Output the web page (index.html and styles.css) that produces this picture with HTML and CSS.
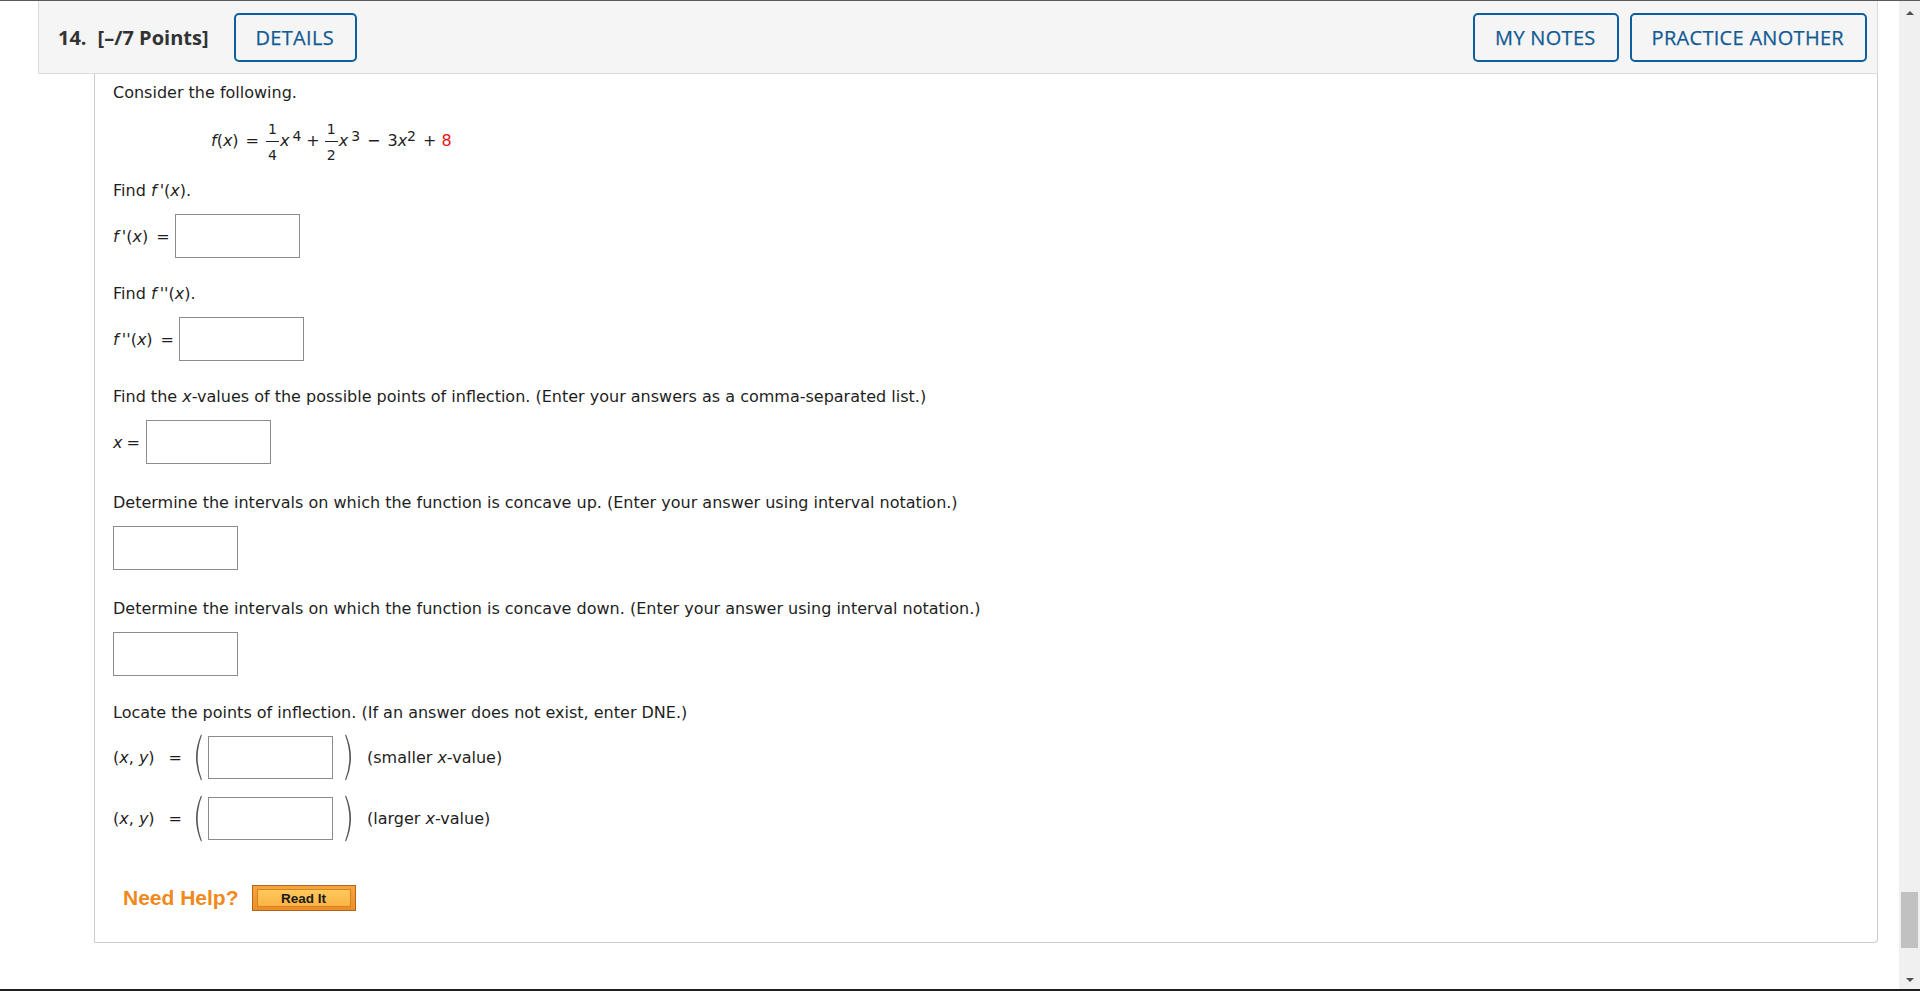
FILE: index.html
```html
<!DOCTYPE html>
<html lang="en">
<head>
<meta charset="utf-8">
<title>Question 14</title>
<link rel="stylesheet" href="styles.css">
</head>
<body>
<div class="frame">
  <div class="topline"></div>
  <div class="viewport">
    <div class="page">
      <div class="qhead">
        <div class="qnum"><span>14.</span><span class="pts">[–/7 Points]</span></div>
        <button class="hbtn details">DETAILS</button>
        <div class="spacer"></div>
        <button class="hbtn notes">MY NOTES</button>
        <button class="hbtn">PRACTICE ANOTHER</button>
      </div>
      <div class="qbody">
        <p class="txt">Consider the following.</p>
        <div class="eq"><i>f</i>(<i>x</i>)<span class="op w">=</span><span class="frac"><span class="num">1</span><span class="den">4</span></span><i class="v">x</i><sup class="g">4</sup><span class="op">+</span><span class="frac"><span class="num">1</span><span class="den">2</span></span><i class="v">x</i><sup class="g">3</sup><span class="op w">−</span>3<i>x</i><sup>2</sup><span class="op wl">+</span><span class="red">8</span></div>

        <div class="q q1">
          <p class="txt">Find <i>f</i>&thinsp;'(<i>x</i>).</p>
          <div class="row"><span class="lbl"><i>f</i>&thinsp;'(<i>x</i>)<span class="eqs">=</span></span><input class="ans" type="text"></div>
        </div>

        <div class="q">
          <p class="txt">Find <i>f</i>&thinsp;''(<i>x</i>).</p>
          <div class="row"><span class="lbl"><i>f</i>&thinsp;''(<i>x</i>)<span class="eqs">=</span></span><input class="ans" type="text"></div>
        </div>

        <div class="q">
          <p class="txt">Find the <i>x</i>-values of the possible points of inflection. (Enter your answers as a comma-separated list.)</p>
          <div class="row"><span class="lbl"><i>x</i><span class="eqs t">=</span></span><input class="ans" type="text"></div>
        </div>

        <div class="q q-wide">
          <p class="txt">Determine the intervals on which the function is concave up. (Enter your answer using interval notation.)</p>
          <div class="row"><input class="ans" type="text"></div>
        </div>

        <div class="q q-wide">
          <p class="txt">Determine the intervals on which the function is concave down. (Enter your answer using interval notation.)</p>
          <div class="row"><input class="ans" type="text"></div>
        </div>

        <div class="q q-loc">
          <p class="txt">Locate the points of inflection. (If an answer does not exist, enter DNE.)</p>
          <div class="prow first">
            <span class="lbl">(<i>x</i>, <i>y</i>)<span class="eqs p">=</span></span>
            <svg class="paren lp" width="12" height="47" viewBox="0 0 12 47"><path d="M11 0.5 Q1 23.5 11 46.5 L11.9 45.8 Q3.4 23.5 11.9 1.2 Z" fill="#555"/></svg>
            <input class="ans pt" type="text">
            <svg class="paren rp" width="12" height="47" viewBox="0 0 12 47"><path d="M1 0.5 Q11 23.5 1 46.5 L0.1 45.8 Q8.6 23.5 0.1 1.2 Z" fill="#555"/></svg>
            <span class="note">(smaller <i>x</i>-value)</span>
          </div>
          <div class="prow">
            <span class="lbl">(<i>x</i>, <i>y</i>)<span class="eqs p">=</span></span>
            <svg class="paren lp" width="12" height="47" viewBox="0 0 12 47"><path d="M11 0.5 Q1 23.5 11 46.5 L11.9 45.8 Q3.4 23.5 11.9 1.2 Z" fill="#555"/></svg>
            <input class="ans pt" type="text">
            <svg class="paren rp" width="12" height="47" viewBox="0 0 12 47"><path d="M1 0.5 Q11 23.5 1 46.5 L0.1 45.8 Q8.6 23.5 0.1 1.2 Z" fill="#555"/></svg>
            <span class="note">(larger <i>x</i>-value)</span>
          </div>
        </div>

        <div class="help">
          <span class="needhelp">Need Help?</span>
          <button class="readit"><span>Read It</span></button>
        </div>
      </div>
    </div>
    <div class="scrollbar">
      <div class="sb-up"></div>
      <div class="sb-track"></div>
      <div class="sb-thumb"></div>
      <div class="sb-down"></div>
    </div>
  </div>
  <div class="bottomline"></div>
</div>
</body>
</html>
```

FILE: styles.css
```css
* { box-sizing: border-box; }
html, body { margin: 0; height: 991px; overflow: hidden; background: #fff; }
body { font-family: "DejaVu Sans", Verdana, sans-serif; font-size: 16px; color: #1e1e1e; }

.frame { height: 991px; display: flex; flex-direction: column; }
.topline { height: 1px; background: #5a5a5a; flex: none; }
.bottomline { height: 2px; background: #1f1f1f; flex: none; }
.viewport { flex: 1; display: flex; min-height: 0; }
.page { flex: 1; padding: 0 21px 0 38px; }

/* scrollbar */
.scrollbar { width: 21px; flex: none; background: #f0f0f0; display: flex; flex-direction: column; align-items: center; }
.sb-up { width: 0; height: 0; border-left: 4px solid transparent; border-right: 4px solid transparent; border-bottom: 4px solid #505050; margin-top: 10px; }
.sb-track { flex: 1; }
.sb-thumb { width: 17px; height: 56px; background: #c1c1c1; margin-bottom: 30px; }
.sb-down { width: 0; height: 0; border-left: 4px solid transparent; border-right: 4px solid transparent; border-top: 4px solid #505050; margin-bottom: 7px; }

/* question header */
.qhead { height: 73px; display: flex; align-items: center; background: #f5f5f5; border: 1px solid #dcdcdc; border-top: 0; padding: 0 10px 0 19px; }
.qnum { font-family: "Open Sans", sans-serif; font-weight: 700; font-size: 20px; color: #333; white-space: nowrap; }
.qnum .pts { margin-left: 11px; }
.hbtn { font-family: "Open Sans", sans-serif; font-size: 20px; font-weight: 400; letter-spacing: 0.3px; -webkit-text-stroke: 0.25px #125a93; color: #125a93; background: transparent; border: 2px solid #0f5f9c; border-radius: 5px; height: 49px; padding: 0 21px 0 20px; margin: 0; white-space: nowrap; cursor: pointer; }
.details { margin-left: 25px; }
.notes { margin-right: 11px; }
.spacer { flex: 1; }

/* question body */
.qbody { margin-left: 56px; border: 1px solid #cccccc; border-top: 0; border-radius: 0 0 4px 0; padding: 9px 18px 31px 18px; }
.txt { margin: 0; line-height: 19px; white-space: nowrap; }
i { font-style: italic; }

.eq { margin-top: 20px; padding-left: 98px; line-height: 19px; white-space: nowrap; }
.op { margin: 0 5px; }
.op.w { margin: 0 7px; }
.op.wl { margin: 0 5px 0 7px; }
.v { margin-left: 1px; }
sup { font-size: 14px; line-height: 0; vertical-align: 5px; }
sup.g { margin-left: 3px; }
.red { color: #f01010; }
.frac { display: inline-block; vertical-align: -14px; text-align: center; font-size: 14px; line-height: 15px; }
.num { display: block; padding: 0 2px 4px; border-bottom: 1px solid #222; }
.den { display: block; padding-top: 6px; }

.q { margin-top: 26px; }
.q1 { margin-top: 18px; }
.q-wide { margin-top: 29px; }
.q-loc { margin-top: 27px; }

.row { display: flex; align-items: center; margin-top: 14px; height: 44px; line-height: 19px; }
.lbl { white-space: nowrap; line-height: 19px; }
.eqs { margin: 0 5px 0 8px; }
.eqs.t { margin: 0 6px 0 4px; }
.eqs.p { margin: 0 8px 0 14px; }

.ans { width: 125px; height: 44px; border: 1px solid #8c8c8c; border-radius: 0; background: #fff; padding: 0 4px; margin: 0; font: 16px "DejaVu Sans", sans-serif; }
.ans.pt { height: 43px; }

.prow { display: flex; align-items: center; height: 47px; margin-top: 14px; line-height: 19px; }
.prow.first { margin-top: 12px; }
.paren { display: block; flex: none; }
.paren.lp { margin-right: 6px; }
.paren.rp { margin-left: 12px; }
.note { margin-left: 10px; white-space: nowrap; }

.help { display: flex; align-items: center; height: 26px; margin-top: 43px; padding-left: 10px; }
.needhelp { font-family: "Liberation Sans", Arial, sans-serif; font-weight: 700; font-size: 21px; color: #f0891c; }
.readit { margin-left: 13px; width: 104px; height: 26px; padding: 3px 4px; border: 1px solid #b0661f; background: linear-gradient(#f6a540, #ee8d25); display: flex; cursor: pointer; }
.readit span { flex: 1; border: 1px solid #d2831f; background: linear-gradient(#ffc85c, #fbb345); font-family: "Liberation Sans", Arial, sans-serif; font-weight: 700; font-size: 13.5px; color: #1a1a1a; display: flex; align-items: center; justify-content: center; }
```
